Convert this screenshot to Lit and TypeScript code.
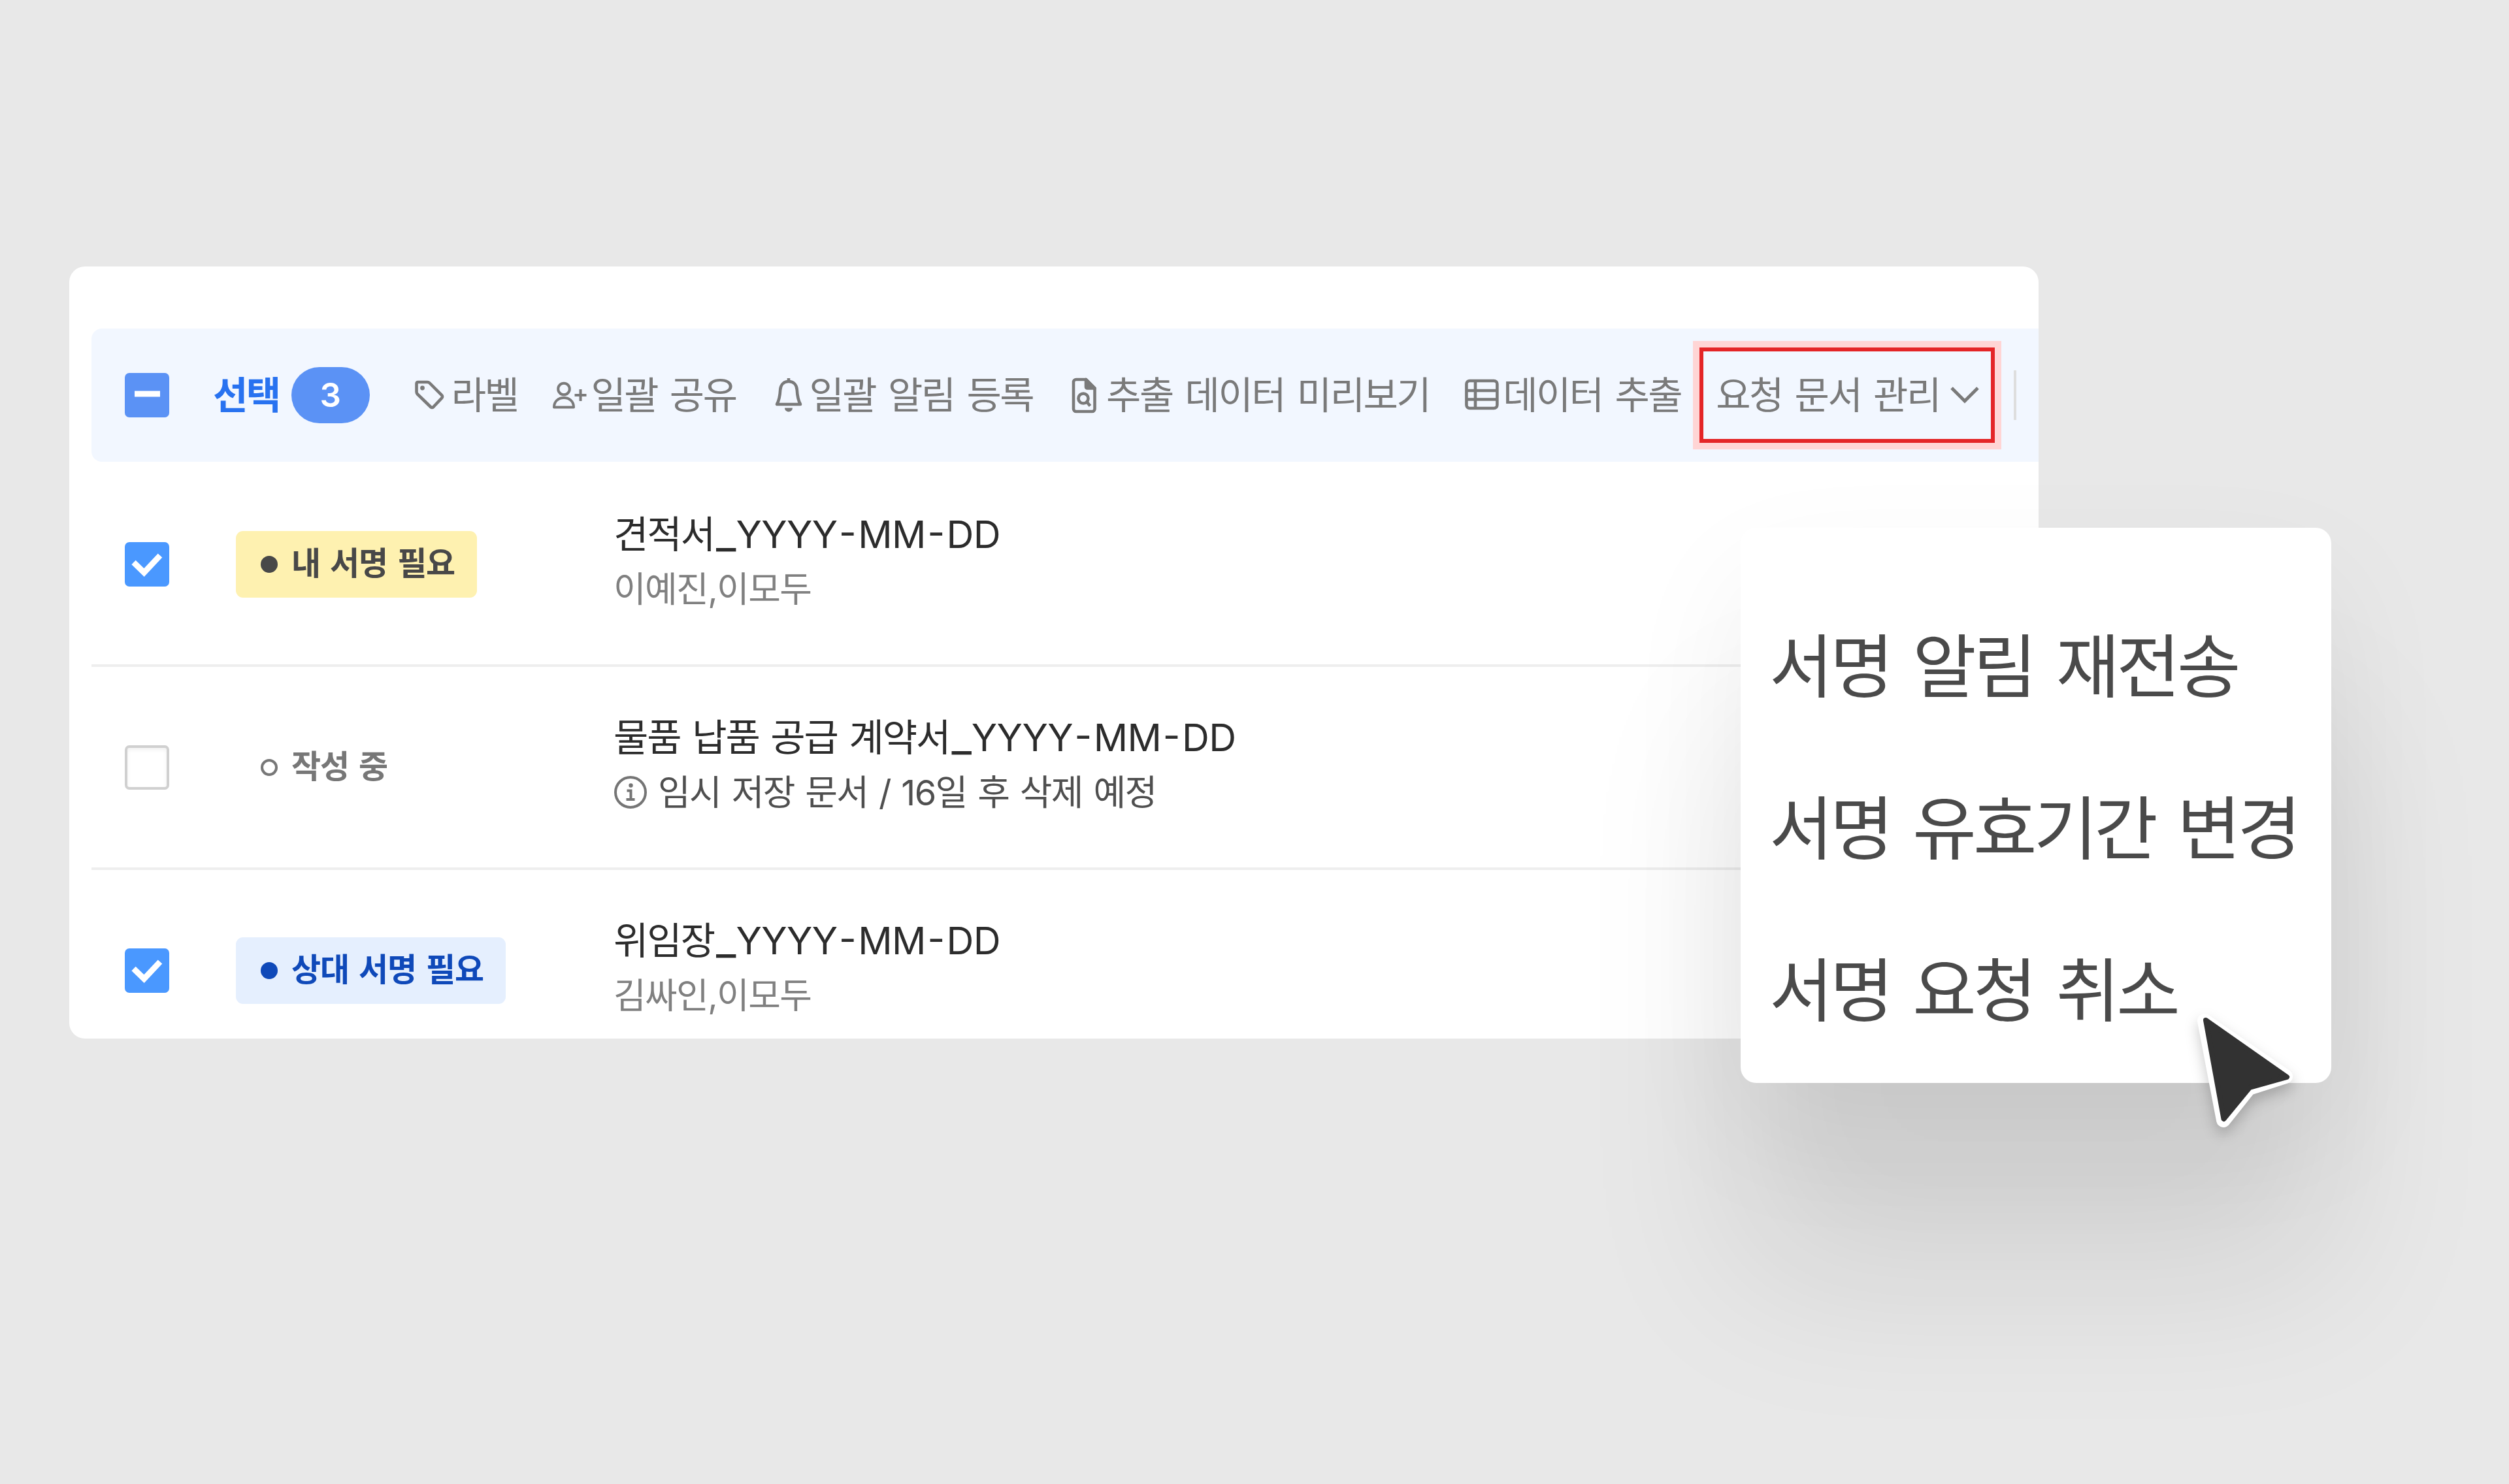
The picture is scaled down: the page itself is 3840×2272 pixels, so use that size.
import { LitElement, html, svg, css } from 'lit';
import { customElement, property } from 'lit/decorators.js';

const icons: Record<string, unknown> = {
  tag: svg`
    <path d="M6.5 11h14.500a5 5 0 0 1 3.600 1.500l18.600 18.600a3 3 0 0 1 0 4.200L30.300 49a3 3 0 0 1-4.200 0L6 29.500a5 5 0 0 1-1.500-3.500V13.500A2.500 2.500 0 0 1 6.500 11z"/>
    <circle cx="13.500" cy="20" r="3.400" fill="currentColor" stroke="none"/>`,
  share: svg`
    <g stroke-width="4">
      <circle cx="17" cy="21.500" r="8.800"/>
      <path d="M2 49.500c0-9 6.500-14.500 15-14.500s15 5.500 15 14.500z"/>
      <path d="M42.500 22v18M33.500 31h18"/>
    </g>`,
  bell: svg`
    <path d="M26 10c-7.500 0-12.300 5-12.800 13-.5 9-1.200 15-5.200 22h36c-4-7-4.700-13-5.200-22C38.300 15 33.500 10 26 10zM26 5v5"/>
    <path d="M20 50.500h12a6 6 0 0 1-12 0z" fill="currentColor" stroke="none"/>`,
  file: svg`
    <path d="M12 7h15l13.500 13.500V52a4 4 0 0 1-4 4H12a4 4 0 0 1-4-4V11a4 4 0 0 1 4-4z"/>
    <path d="M27 7v11.500a2 2 0 0 0 2 2h11.500z" fill="currentColor"/>
    <circle cx="23" cy="36" r="7.500"/>
    <path d="M28.500 41.500l5 6"/>`,
  table: svg`
    <rect x="2.400" y="9" width="47" height="42" rx="5"/>
    <path d="M2 24h48M2 37.500h48M16 9v42"/>`,
};

// Latin marks in a title are spaced apart from the Hangul next to them.
const runs = (text: string) =>
  text.split(/([_-]|[A-Z]+)/).filter(Boolean).map((run) => {
    if (run === '_') return html`<span class="under">_</span>`;
    if (run === '-') return html`<span class="hyphen">-</span>`;
    return /^[A-Z]+$/.test(run) ? html`<span class="latin">${run}</span>` : run;
  });

@customElement('check-box')
export class CheckBox extends LitElement {
  @property() state = 'off';

  static styles = css`
    :host {
      display: block;
      flex: none;
      width: 68px;
      height: 68px;
    }

    .box {
      display: block;
      box-sizing: border-box;
      width: 68px;
      height: 68px;
      border-radius: 7px;
    }

    .on {
      background: #4a98ff;
    }

    .mixed {
      background: #5b92f5;
    }

    .off {
      border: 4px solid #d0d0d0;
      background: #fff;
      box-shadow: inset 0 3px 6px rgba(0, 0, 0, 0.06);
    }
  `;

  render() {
    return html`
      <svg class="box ${this.state}" viewBox="0 0 68 68" fill="none" stroke="#fff">
        ${this.state === 'on' ? svg`<path d="M13.500 31l16 15.500L54 20.500" stroke-width="9"/>` : null}
        ${this.state === 'mixed' ? svg`<path d="M15 32h39" stroke-width="9"/>` : null}
      </svg>
    `;
  }
}

@customElement('tool-item')
export class ToolItem extends LitElement {
  @property() icon = '';
  @property() label = '';

  static styles = css`
    :host {
      display: flex;
      align-items: center;
      white-space: nowrap;
    }

    .icon {
      width: 58px;
      height: 62px;
      fill: none;
      stroke: currentColor;
      stroke-width: 4.6;
      stroke-linejoin: round;
    }
  `;

  render() {
    return html`
      ${this.icon ? html`<svg class="icon" viewBox="0 0 58 62">${icons[this.icon]}</svg>` : null}
      <span>${this.label}</span>
      <slot></slot>
    `;
  }
}

@customElement('app-root')
export class AppRoot extends LitElement {
  tools = [
    { icon: 'tag', label: '라벨' },
    { icon: 'share', label: '일괄 공유' },
    { icon: 'bell', label: '일괄 알림 등록' },
    { icon: 'file', label: '추출 데이터 미리보기' },
    { icon: 'table', label: '데이터 추출' },
  ];

  documents = [
    { check: 'on', status: 'mine', label: '내 서명 필요', title: '견적서_YYYY-MM-DD', sub: '이예진,이모두' },
    {
      check: 'off',
      status: 'draft',
      label: '작성 중',
      title: '물품 납품 공급 계약서_YYYY-MM-DD',
      sub: '임시 저장 문서 / 16일 후 삭제 예정',
      info: true,
    },
    { check: 'on', status: 'theirs', label: '상대 서명 필요', title: '위임장_YYYY-MM-DD', sub: '김싸인,이모두' },
  ];

  actions = ['서명 알림 재전송', '서명 유효기간 변경', '서명 요청 취소'];

  static styles = css`
    :host {
      display: block;
      position: relative;
      box-sizing: border-box;
      width: 3840px;
      height: 2272px;
      padding: 408px 0 0 106px;
      overflow: hidden;
      background: #e8e8e8;
      font-family: 'Inter', 'Noto Sans CJK KR', sans-serif;
      white-space: nowrap;
    }

    .card {
      box-sizing: border-box;
      width: 3014px;
      height: 1182px;
      padding: 95px 0 0 34px;
      border-radius: 24px;
      background: #fff;
      overflow: hidden;
    }

    .toolbar {
      display: flex;
      align-items: center;
      height: 204px;
      margin-bottom: 3px;
      padding-left: 51px;
      border-radius: 16px 0 0 16px;
      background: #f2f7ff;
      color: #7a7a7a;
      font-size: 58px;
      letter-spacing: -0.0435em;
      line-height: 84px;
      word-spacing: 0.086em;
    }

    .selected {
      margin-left: 67px;
      color: #2872f0;
      font-weight: 600;
    }

    .count {
      width: 120px;
      margin-left: 18px;
      border-radius: 43px;
      background: #5b92f5;
      color: #fff;
      font-size: 51px;
      font-weight: 600;
      letter-spacing: 0;
      line-height: 86px;
      text-align: center;
    }

    .tools {
      display: flex;
      gap: 54px;
      margin-left: 67px;
    }

    .highlight {
      box-sizing: border-box;
      width: 452px;
      height: 146px;
      margin: -31px 0 -31px -26px;
      padding-left: 19px;
      border: 6px solid #e42527;
      box-shadow: 0 0 0 10px #ffd5d5;
    }

    .chevron {
      width: 46px;
      height: 30px;
      margin-left: 15px;
      fill: none;
      stroke: currentColor;
      stroke-width: 5;
    }

    .divider {
      width: 4px;
      height: 76px;
      margin-left: 29px;
      background: #dedede;
    }

    .row {
      display: flex;
      align-items: center;
      height: 307px;
      padding-left: 51px;
      border-bottom: 4px solid #eee;
    }

    .status {
      width: 578px;
      margin-left: 102px;
    }

    .badge {
      display: inline-flex;
      align-items: center;
      height: 102px;
      padding: 0 34px 0 38px;
      border-radius: 11px;
      font-size: 49px;
      font-weight: 600;
      letter-spacing: -0.023em;
      line-height: 60px;
      vertical-align: middle;
      word-spacing: 0.08em;
    }

    .badge-text {
      margin-top: -2px;
    }

    .dot {
      box-sizing: border-box;
      width: 26px;
      height: 26px;
      margin-right: 21px;
      border: 4px solid currentColor;
      border-radius: 50%;
      background: currentColor;
    }

    .mine {
      background: #fef1b0;
      color: #484848;
    }

    .draft {
      color: #777;
    }

    .draft .dot {
      background: none;
    }

    .theirs {
      background: #e5effe;
      color: #0f49b9;
    }

    .doc {
      padding-bottom: 7px;
    }

    .title {
      color: #2c2c2c;
      font-size: 58px;
      font-feature-settings: 'case' 1;
      letter-spacing: -0.035em;
      line-height: 84px;
      word-spacing: 0.055em;
    }

    .latin {
      letter-spacing: -0.01em;
    }

    .under {
      margin-left: 3px;
      font-size: 1.15em;
      letter-spacing: 0;
      line-height: 1;
    }

    .hyphen {
      margin: 0 2.5px;
      letter-spacing: 0;
    }

    .sub {
      display: flex;
      align-items: center;
      color: #808080;
      font-size: 54px;
      letter-spacing: -0.03em;
      line-height: 85px;
      word-spacing: 0.055em;
    }

    .sub.dark {
      color: #4f4f4f;
    }

    .info {
      width: 52px;
      height: 52px;
      margin-right: 16px;
      color: #757575;
    }

    .menu {
      position: absolute;
      left: 2664px;
      top: 808px;
      box-sizing: border-box;
      width: 904px;
      height: 850px;
      padding: 89px 0 0 44px;
      border-radius: 24px;
      background: #fff;
      box-shadow:
        0 80px 200px rgba(0, 0, 0, 0.06),
        0 300px 480px rgba(0, 0, 0, 0.095);
      color: #4a4a4a;
      font-size: 106px;
      letter-spacing: -0.046em;
      line-height: 248px;
      word-spacing: 0.086em;
    }

    .cursor {
      position: absolute;
      left: 3345px;
      top: 1540px;
      width: 180px;
      height: 220px;
      overflow: visible;
      filter: drop-shadow(0 10px 10px rgba(0, 0, 0, 0.2));
    }
  `;

  renderInfoIcon() {
    return html`
      <svg class="info" viewBox="0 0 52 52" fill="none" stroke="currentColor" stroke-width="4">
        <circle cx="26" cy="26" r="23" />
        <path d="M20.500 23.500h6v13.500M19.500 37h13" />
        <circle cx="26.500" cy="15.500" r="3.200" fill="currentColor" stroke="none" />
      </svg>
    `;
  }

  render() {
    return html`
      <div class="card">
        <div class="toolbar">
          <check-box state="mixed"></check-box>
          <span class="selected">선택</span>
          <span class="count">3</span>
          <div class="tools">
            ${this.tools.map((tool) => html`<tool-item icon=${tool.icon} label=${tool.label}></tool-item>`)}
            <tool-item class="highlight" label="요청 문서 관리">
              <svg class="chevron" viewBox="0 0 46 30"><path d="M3 4l20 20L43 4" /></svg>
            </tool-item>
          </div>
          <div class="divider"></div>
        </div>
        ${this.documents.map(
          (doc) => html`
            <div class="row">
              <check-box state=${doc.check}></check-box>
              <div class="status">
                <span class="badge ${doc.status}">
                  <span class="dot"></span>
                  <span class="badge-text">${doc.label}</span>
                </span>
              </div>
              <div class="doc">
                <div class="title">${runs(doc.title)}</div>
                <div class="sub ${doc.info ? 'dark' : ''}">${doc.info ? this.renderInfoIcon() : null}${doc.sub}</div>
              </div>
            </div>
          `
        )}
      </div>
      <div class="menu">${this.actions.map((action) => html`<div>${action}</div>`)}</div>
      <svg class="cursor" viewBox="0 0 180 220">
        <path
          d="M29 23L153 108L97 126L58 175Z"
          fill="#fff"
          stroke="#fff"
          stroke-width="22"
          stroke-linejoin="round"
        />
        <path
          d="M31 22L155 109L98 125L58.500 173Z"
          fill="#323232"
          stroke="#323232"
          stroke-width="8"
          stroke-linejoin="round"
        />
      </svg>
    `;
  }
}
